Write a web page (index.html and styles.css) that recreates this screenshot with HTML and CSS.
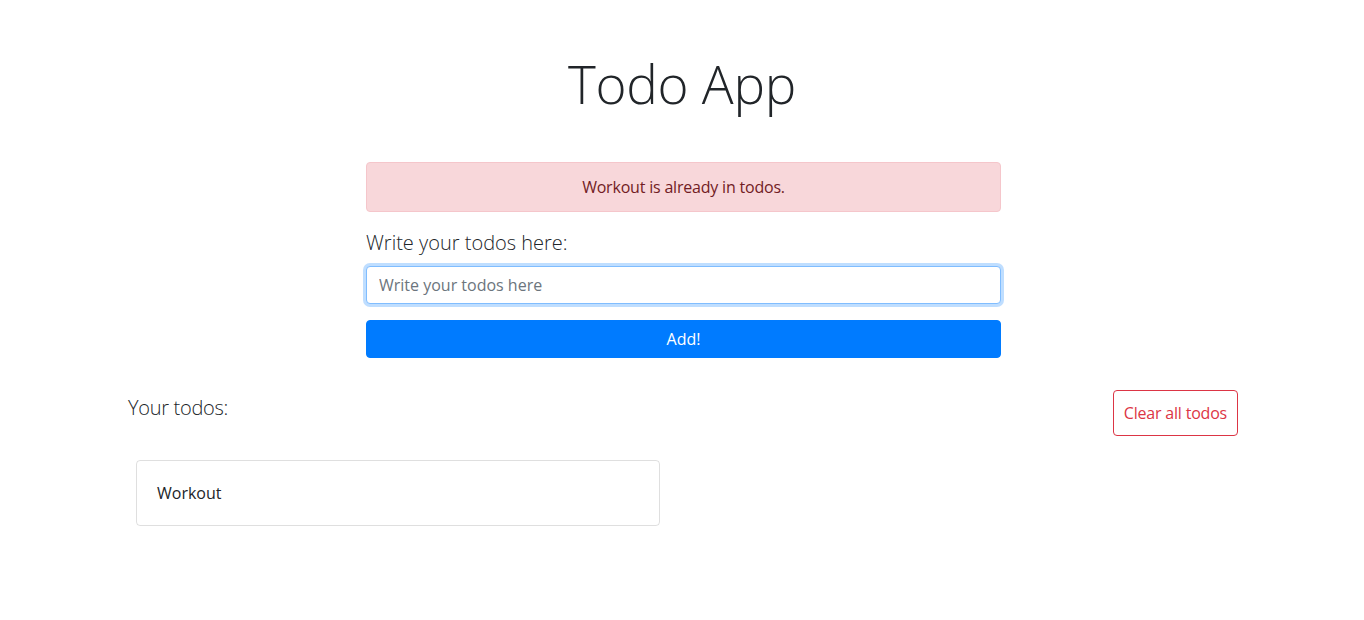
FILE: index.html
```html
<!DOCTYPE html>
<html lang="en">
<head>
<meta charset="utf-8">
<title>Todo App</title>
<link rel="stylesheet" href="styles.css">
</head>
<body>
<div class="container">
  <h1 class="title">Todo App</h1>
  <div class="form-col">
    <div class="alert">Workout is already in todos.</div>
    <form class="todo-form">
      <label class="lead" for="todo">Write your todos here:</label>
      <input class="input" id="todo" type="text" placeholder="Write your todos here">
      <button class="btn-add" type="button">Add!</button>
    </form>
  </div>
  <div class="list-head">
    <p class="lead heading">Your todos:</p>
    <button class="btn-clear" type="button">Clear all todos</button>
  </div>
  <div class="cards">
    <div class="card">Workout</div>
  </div>
</div>
</body>
</html>
```
FILE: styles.css
```css
* { box-sizing: border-box; }
html, body { margin: 0; padding: 0; }
body {
  font-family: "Open Sans", "Noto Sans", "Liberation Sans", sans-serif;
  font-size: 16px;
  line-height: 1.5;
  color: #212529;
  background: #fff;
}
.container {
  width: 1140px;
  margin: 0 auto;
  padding: 0 15px;
}
.title {
  margin: 0;
  padding-top: 52px;
  text-align: center;
  font-size: 53px;
  font-weight: 300;
  line-height: 1.2;
  color: #212529;
  letter-spacing: -0.3px;
}
.form-col {
  width: 635px;
  margin: 46px 0 0 239px;
}
.alert {
  padding: 12px 20px;
  border: 1px solid #f5c6cb;
  border-radius: 4px;
  background: #f8d7da;
  color: #721c24;
  text-align: center;
  letter-spacing: -0.2px;
}
.todo-form {
  display: flex;
  flex-direction: column;
  margin-top: 16px;
}
.lead {
  font-size: 20px;
  font-weight: 300;
  line-height: 1.5;
  margin: 0 0 8px;
}
.input {
  height: 38px;
  padding: 6px 12px;
  font: inherit;
  font-size: 16px;
  color: #495057;
  border: 1px solid #80bdff;
  border-radius: 4px;
  box-shadow: 0 0 0 3px rgba(0, 123, 255, 0.25);
  outline: none;
}
.input::placeholder { color: #6c757d; }
.btn-add {
  margin-top: 16px;
  height: 38px;
  font: inherit;
  color: #fff;
  background: #007bff;
  border: 1px solid #007bff;
  border-radius: 4px;
}
.list-head {
  display: flex;
  justify-content: space-between;
  align-items: flex-start;
  margin-top: 32px;
}
.heading { margin: 3px 0 0 1px; letter-spacing: -0.3px; }
.btn-clear {
  font: inherit;
  color: #dc3545;
  background: #fff;
  border: 1px solid #dc3545;
  border-radius: 4px;
  padding: 10px 10px 10px 10px;
  margin-right: -1px;
  letter-spacing: -0.2px;
}
.cards {
  margin-top: 24px;
  padding-left: 9px;
}
.card {
  width: 524px;
  padding: 20px;
  border: 1px solid rgba(0, 0, 0, 0.125);
  border-radius: 4px;
}
```
